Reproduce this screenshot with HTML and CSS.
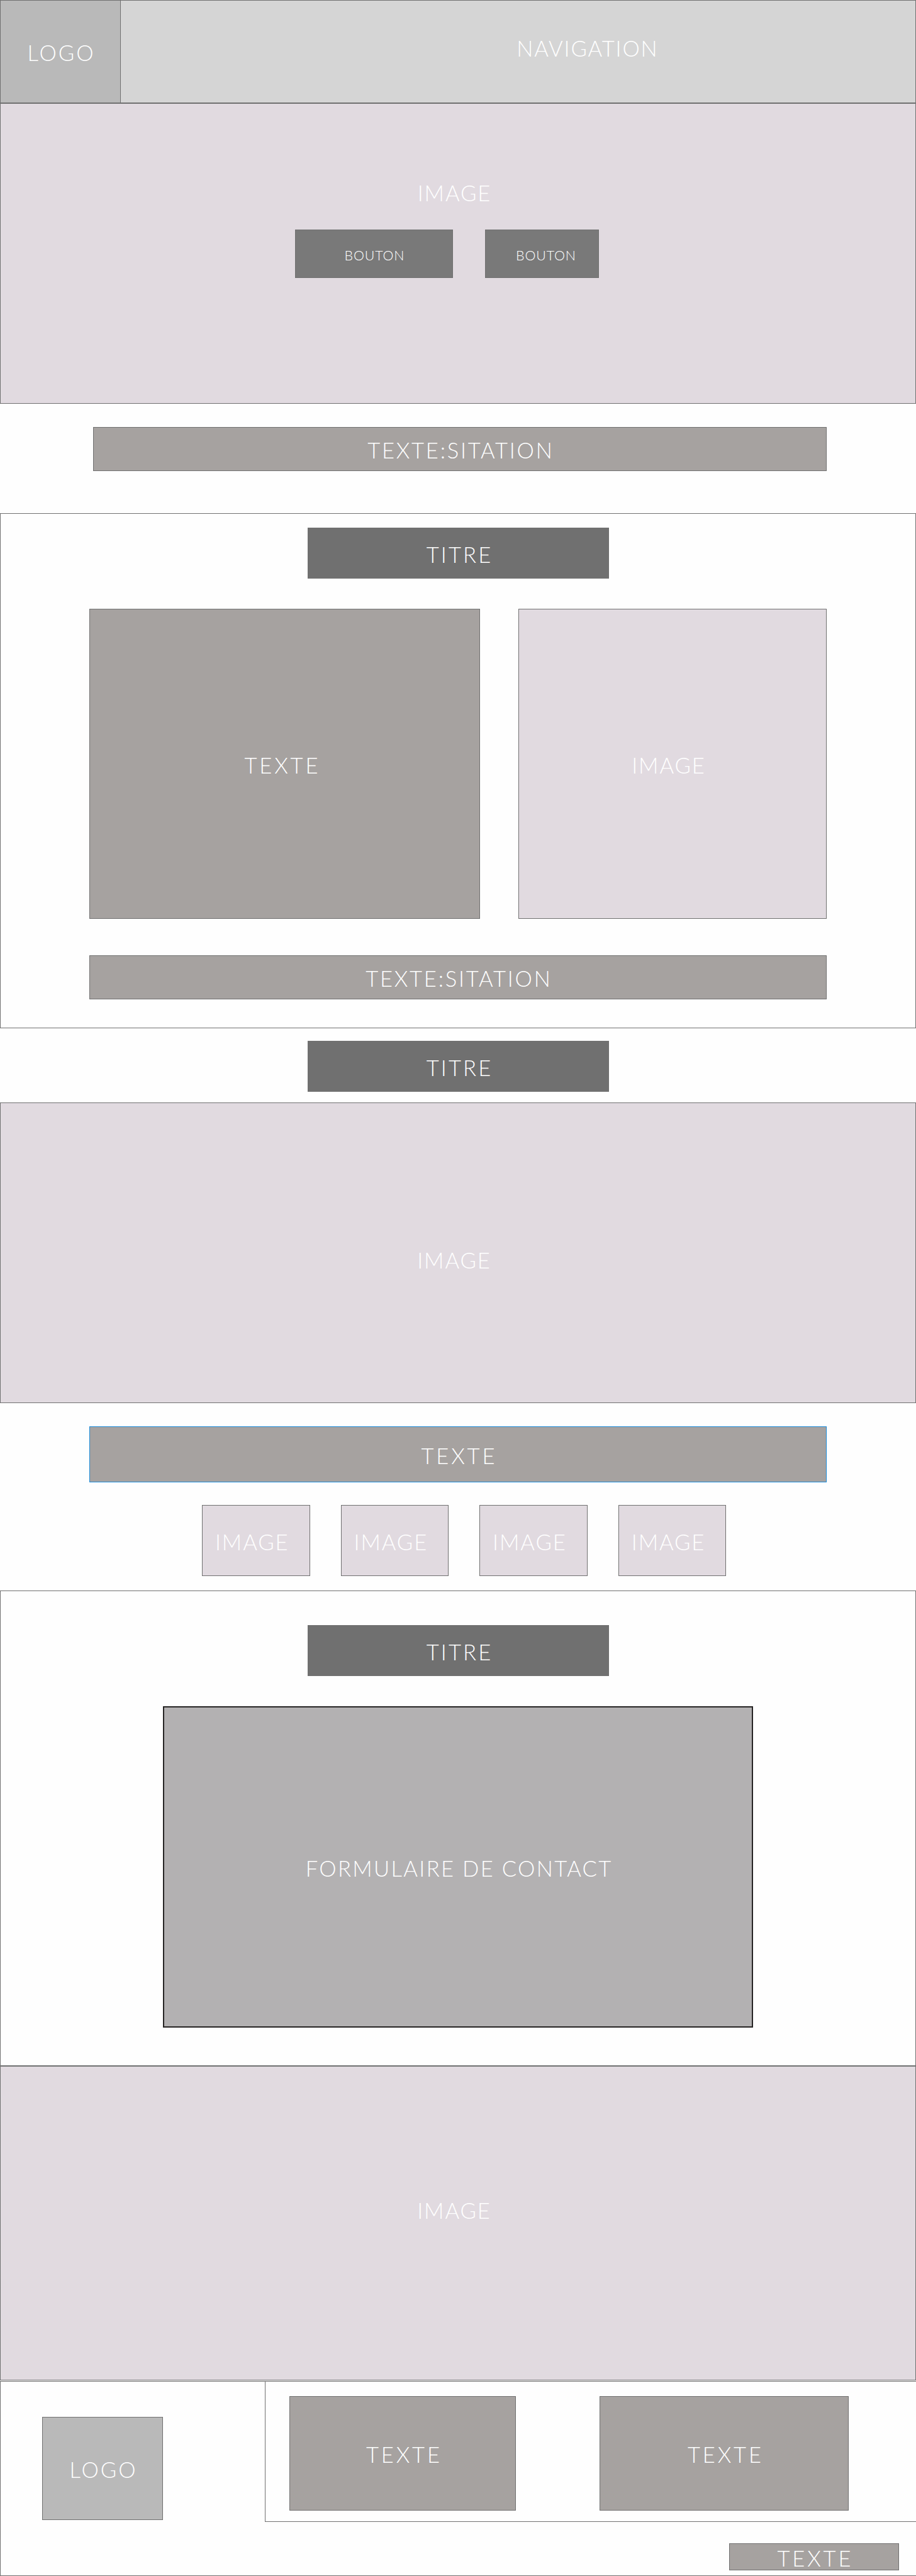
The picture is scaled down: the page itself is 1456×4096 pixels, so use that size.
FILE: index.html
```html
<!DOCTYPE html>
<html lang="fr">
<head>
<meta charset="utf-8">
<title>Maquette</title>
<link rel="stylesheet" href="styles.css">
</head>
<body>
<header class="header">
  <div class="header-logo"><span class="label logo">LOGO</span></div>
  <nav class="nav"><span class="label navigation">NAVIGATION</span></nav>
</header>

<section class="hero">
  <span class="label image">IMAGE</span>
  <div class="buttons">
    <a class="button button-wide"><span class="label bouton">BOUTON</span></a>
    <a class="button button-small"><span class="label bouton">BOUTON</span></a>
  </div>
</section>

<div class="box quote quote-top"><span class="label sitation">TEXTE:SITATION</span></div>

<section class="about">
  <h2 class="title"><span class="label titre">TITRE</span></h2>
  <div class="columns">
    <div class="box about-text"><span class="label texte">TEXTE</span></div>
    <div class="picture about-image"><span class="label image">IMAGE</span></div>
  </div>
  <div class="box quote"><span class="label sitation">TEXTE:SITATION</span></div>
</section>

<section class="gallery">
  <h2 class="title"><span class="label titre">TITRE</span></h2>
  <div class="picture banner"><span class="label image">IMAGE</span></div>
  <div class="box selected"><span class="label texte">TEXTE</span></div>
  <div class="thumbs">
    <div class="picture"><span class="label image">IMAGE</span></div>
    <div class="picture"><span class="label image">IMAGE</span></div>
    <div class="picture"><span class="label image">IMAGE</span></div>
    <div class="picture"><span class="label image">IMAGE</span></div>
  </div>
</section>

<section class="contact">
  <h2 class="title"><span class="label titre">TITRE</span></h2>
  <div class="form"><span class="label formulaire">FORMULAIRE DE CONTACT</span></div>
</section>

<div class="picture closing"><span class="label image">IMAGE</span></div>

<footer class="footer">
  <div class="footer-brand">
    <div class="footer-logo"><span class="label logo">LOGO</span></div>
  </div>
  <div class="footer-main">
    <div class="footer-columns">
      <div class="box footer-first"><span class="label texte">TEXTE</span></div>
      <div class="box footer-second"><span class="label texte">TEXTE</span></div>
    </div>
    <div class="box footer-note"><span class="label texte">TEXTE</span></div>
  </div>
</footer>
</body>
</html>
```
FILE: styles.css
```css
* { box-sizing: border-box; }

:root {
  --line: #707070;
  --lilac: #e1dae0;
  --taupe: #a6a2a0;
  --silver: #b9b9b9;
}

body {
  margin: 0;
  background: #fefefe;
  color: #fff;
  font: 300 34.6px/40px Lato, "Open Sans", sans-serif;
}

/* Labels: tracking differs by word, the trailing space is pulled back in */
.label {
  letter-spacing: var(--track);
  margin-right: calc(var(--track) * -1);
  white-space: nowrap;
}
.logo { --track: 3px; }
.navigation { --track: 1.85px; }
.image { --track: 1.93px; }
.bouton { --track: 0.85px; font-size: 21.4px; }
.sitation { --track: 2.75px; }
.titre { --track: 3.1px; }
.texte { --track: 3.85px; }
.formulaire { --track: 2.33px; }

.box, .picture, .title, .button, .form, .header-logo, .footer-logo, .nav {
  display: flex;
  align-items: center;
  justify-content: center;
  padding-top: 4px;
}
.box { background: var(--taupe); border: 1px solid var(--line); }
.picture {
  background: var(--lilac);
  border: 1px solid var(--line);
  padding-right: 14px;
}

/* Header */
.header {
  display: flex;
  height: 164px;
  border: 1px solid var(--line);
}
.header-logo {
  width: 191px;
  background: var(--silver);
  border-right: 1px solid var(--line);
}
.nav {
  flex: 1;
  background: #d5d5d5;
  padding: 0 0 10px 219px;
}

/* Hero */
.hero {
  display: flex;
  flex-direction: column;
  align-items: center;
  height: 478px;
  padding-top: 122px;
  background: var(--lilac);
  border: 1px solid var(--line);
}
.hero > .label { padding-right: 13px; }
.buttons {
  display: flex;
  gap: 51px;
  align-self: flex-start;
  margin: 38px 0 0 468px;
}
.button {
  height: 77px;
  background: #797979;
  border: 1px solid var(--line);
}
.button-wide { width: 251px; padding-left: 1px; }
.button-small { width: 181px; padding-left: 12px; }

/* Quotes and titles */
.quote { height: 70px; }
.quote-top { width: 1166px; margin: 37px 0 67px 148px; }
.title {
  width: 479px;
  margin: 0 auto;
  padding-left: 2px;
  background: var(--line);
  font: inherit;
}

/* About */
.about {
  height: 819px;
  padding: 22px 141px 0;
  border: 1px solid var(--line);
}
.about .title { height: 81px; }
.columns {
  display: flex;
  justify-content: space-between;
  height: 493px;
  margin: 48px 0 58px;
}
.about-text { width: 621px; padding-right: 11px; }
.about-image { width: 490px; }

/* Gallery */
.gallery { height: 894px; padding-top: 20px; }
.gallery .title { height: 81px; }
.banner { height: 478px; margin-top: 17px; padding-top: 24px; }
.selected {
  width: 1172px;
  height: 89px;
  margin: 37px 0 0 142px;
  border-color: #1a8ad8;
}
.thumbs {
  display: flex;
  gap: 49px;
  margin: 36px 0 0 321px;
}
.thumbs .picture { width: 171.6px; height: 113px; }

/* Contact */
.contact {
  height: 756px;
  padding-top: 54px;
  border: 1px solid var(--line);
}
.contact .title { height: 81px; }
.form {
  width: 938px;
  height: 511px;
  margin: 48px auto 0;
  padding-left: 1px;
  background: #b3b1b2;
  border: 2px solid #262424;
}
.closing { height: 500px; padding-top: 0; padding-bottom: 40px; }

/* Footer */
.footer {
  display: flex;
  height: 310px;
  margin-top: 1px;
  border: 1px solid var(--line);
  border-right: 0;
}
.footer-brand { width: 420px; padding: 56px 0 0 66px; }
.footer-logo {
  width: 192px;
  height: 164px;
  background: var(--silver);
  border: 1px solid var(--line);
}
.footer-main { flex: 1; }
.footer-columns {
  display: flex;
  gap: 133px;
  height: 223px;
  padding: 23px 0 0 38px;
  border: 1px solid var(--line);
  border-width: 0 0 1px 1px;
}
.footer-columns .box { height: 182px; padding-left: 1px; }
.footer-first { width: 360px; }
.footer-second { width: 396px; }
.footer-note { width: 270px; height: 43px; margin: 34px 0 0 738px; }
```
